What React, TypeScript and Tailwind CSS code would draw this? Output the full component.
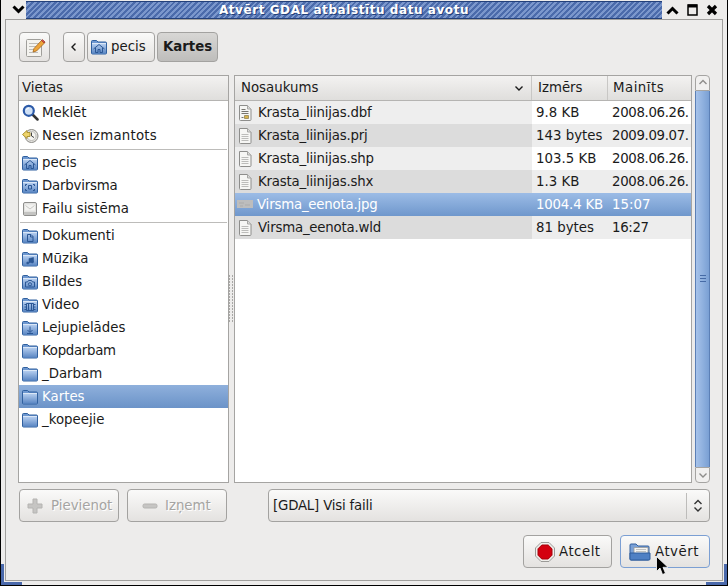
import React from 'react';

const FONT = "font-['DejaVu_Sans','Liberation_Sans',sans-serif]";

type Glyph = 'home' | 'desk' | 'doc' | 'music' | 'camera' | 'video' | 'down' | 'none';

function Folder({ glyph = 'none', size = 16 }: { glyph?: Glyph; size?: number }) {
  const s = '#2b5795';
  return (
    <svg width={size} height={size} viewBox="0 0 16 16" className="shrink-0">
      <defs>
        <linearGradient id="folderFill" x1="0" y1="0" x2="0" y2="1">
          <stop offset="0" stopColor="#b3ccee" />
          <stop offset="1" stopColor="#5a86c3" />
        </linearGradient>
      </defs>
      <path d="M.5 2.500a1 1 0 0 1 1-1h4l1.500 1.500h7.500a1 1 0 0 1 1 1v10a1 1 0 0 1-1 1h-13a1 1 0 0 1-1-1z" fill="#6d97d0" stroke="#30609f" />
      <path d="M1 5h14v9.500H1z" fill="url(#folderFill)" />
      <path d="M1 4.500h14" stroke="#dbe7f6" />
      {glyph === 'home' && <path d="M2.500 10 8 5.500l5.500 4.500M4.500 9v4.500h2.500v-3h2v3h2.500V9" fill="none" stroke={s} />}
      {glyph === 'desk' && <path d="M5 6.500H3.500v1.500M11 6.500h1.500v1.500M3.500 11v1.500H5M12.500 11v1.500H11M6.500 7.500h3v3.500h-3z" fill="none" stroke={s} />}
      {glyph === 'doc' && <path d="M5.500 6.500h3.500l2 2v5h-5.500zM8.500 6.500v2.500h2.500" fill="none" stroke={s} />}
      {glyph === 'music' && <path d="M7 12V7.500l4.500-1V11M7 12a1.200 1 0 1 1-2.400 0 1.200 1 0 0 1 2.400 0zM11.500 11a1.200 1 0 1 1-2.400 0 1.200 1 0 0 1 2.400 0z" fill={s} stroke={s} strokeWidth=".6" />}
      {glyph === 'camera' && (
        <g fill="none" stroke={s}>
          <path d="M3.500 8h2l1-1.500h3l1 1.500h2v5h-9z" />
          <circle cx="8" cy="10.300" r="1.600" />
        </g>
      )}
      {glyph === 'video' && <path d="M4.500 6.500h7v7h-7zM6.500 6.500v7M9.500 6.500v7M2.500 7.500h2M2.500 10h2M2.500 12.500h2M11.500 7.500h2M11.500 10h2M11.500 12.500h2" fill="none" stroke={s} />}
      {glyph === 'down' && <path d="M8 6.500v5.500M5.500 10 8 12.500 10.500 10M5 13.500h6" fill="none" stroke={s} />}
    </svg>
  );
}

function Magnifier() {
  return (
    <svg width="17" height="17" viewBox="0 0 17 17" className="shrink-0">
      <path d="m10.500 10.500 5 5" stroke="#333" strokeWidth="2.500" strokeLinecap="round" />
      <circle cx="6.800" cy="6.800" r="5" fill="#cfe0f5" stroke="#2c5aa8" strokeWidth="2.200" />
      <path d="M4.500 6a2.500 2.500 0 0 1 2.500-2" stroke="#fff" fill="none" />
    </svg>
  );
}

function RecentClock() {
  return (
    <svg width="17" height="17" viewBox="0 0 17 17" className="shrink-0">
      <circle cx="9.500" cy="9" r="6.500" fill="#e4e3df" stroke="#8d8c88" />
      <circle cx="9.500" cy="9" r="4.500" fill="#f6f5f1" stroke="#bdbcb8" />
      <path d="M9.500 5.500V9l2.500 1.500" stroke="#444" fill="none" />
      <path d="M.5 7.500 5 3.500v2h3v4H5v2z" fill="#efd46a" stroke="#ad9436" />
    </svg>
  );
}

function Drive() {
  return (
    <svg width="16" height="16" viewBox="0 0 16 16" className="shrink-0">
      <rect x="1.500" y="1.500" width="13" height="13" rx="1.500" fill="#e3e3e1" stroke="#8f8f8d" />
      <path d="M3 3.500h10v6H3z" fill="#f3f3f1" />
      <path d="M3.500 4.500 8 8l4.500-3.500" stroke="#c9c9c7" fill="none" />
      <path d="M2 11h12v3H2z" fill="#c4c4c2" />
    </svg>
  );
}

function FileIcon({ dbf }: { dbf?: boolean }) {
  return (
    <svg width="14" height="16" viewBox="0 0 14 16" className="shrink-0">
      <path d="M1.500.5h8l3.500 3.500v10.500a1 1 0 0 1-1 1H2.500a1 1 0 0 1-1-1z" fill="#f6f6f4" stroke="#8e8e8c" />
      <path d="M9.500.5V4H13" fill="#dcdcda" stroke="#a6a6a4" />
      {!dbf && <path d="M3.500 6.500h7M3.500 8.500h7M3.500 10.500h7M3.500 12.500h7" stroke="#bcbcba" />}
      {dbf && <path d="M3.500 4.500h4M3.500 6.500h7M3.500 8.500h7M3.500 12.500h2" stroke="#77756f" />}
      {dbf && <path d="M6.500 10.500h4v3h-4z" fill="#d8b34d" stroke="#7b6a33" strokeWidth=".6" />}
    </svg>
  );
}

function ImageThumb() {
  return (
    <svg width="16" height="8" viewBox="0 0 16 8" className="shrink-0">
      <rect width="16" height="8" fill="#bdbdbd" />
      <path d="M2 3h5M8 5h5M3 6h3" stroke="#ababab" />
    </svg>
  );
}

function Chevron({ dir, className = '' }: { dir: 'up' | 'down' | 'left'; className?: string }) {
  const d = dir === 'up' ? 'M1.500 6 5 2.500 8.500 6' : dir === 'down' ? 'M1.500 3.500 5 7 8.500 3.500' : 'M6.500 1.500 3 5l3.500 3.500';
  return (
    <svg width="10" height="10" viewBox="0 0 10 10" className={className}>
      <path d={d} fill="none" stroke="currentColor" strokeWidth="1.400" />
    </svg>
  );
}

function EditIcon() {
  return (
    <svg width="22" height="22" viewBox="0 0 22 22">
      <rect x="2.500" y="3.500" width="15" height="17" rx="1" fill="#f4f3ef" stroke="#a09f9b" />
      <path d="M5 7.500h10M5 10.500h7M5 13.500h5M5 16.500h9" stroke="#bdbcb8" />
      <path d="m9 16 1-3.500L18 4l3 2.500-8.500 8.500z" fill="#eda53a" stroke="#a3651b" strokeWidth=".8" />
      <path d="m17.500 4.500 1-1 2.500 2.500-1 1z" fill="#d9534a" stroke="#91312b" strokeWidth=".6" />
    </svg>
  );
}

function PlusIcon() {
  return (
    <svg width="16" height="16" viewBox="0 0 16 16">
      <path d="M6 1h4v5h5v4h-5v5H6v-5H1V6h5z" fill="#c6c5c3" stroke="#b5b4b2" />
    </svg>
  );
}

function MinusIcon() {
  return (
    <svg width="16" height="16" viewBox="0 0 16 16">
      <rect x="1" y="6" width="14" height="4" rx="1.500" fill="#c6c5c3" stroke="#b5b4b2" />
    </svg>
  );
}

function StopIcon() {
  return (
    <svg width="20" height="20" viewBox="0 0 20 20">
      <path d="M6 .5h8L19.500 6v8L14 19.500H6L.5 14V6z" fill="#f0efec" stroke="#9b9a97" />
      <path d="M6.800 3h6.400L17 6.800v6.400L13.200 17H6.800L3 13.200V6.800z" fill="#d4000f" stroke="#a6000a" />
    </svg>
  );
}

function OpenFolderIcon() {
  return (
    <svg width="22" height="20" viewBox="0 0 22 20">
      <path d="M1 3a1 1 0 0 1 1-1h5l2 2h10a1 1 0 0 1 1 1v12a1 1 0 0 1-1 1H2a1 1 0 0 1-1-1z" fill="#7ba1d6" stroke="#33619f" />
      <path d="M5 5.500h14v6H5z" fill="#f4f4f2" stroke="#9a9a98" strokeWidth=".8" />
      <path d="M7 7.500h10M7 9.500h10" stroke="#c2c2c0" />
      <path d="M1 11h20v6a1 1 0 0 1-1 1H2a1 1 0 0 1-1-1z" fill="#4f80c4" stroke="#2f5c9c" />
    </svg>
  );
}

function Cursor() {
  return (
    <svg width="13" height="20" viewBox="0 0 13 20" className="absolute left-[656px] top-[556px]">
      <path d="M.5.5v15l3.500-3.500 2.500 6.500 3-1.200-2.500-6H12z" fill="#000" stroke="#fff" strokeWidth=".8" />
    </svg>
  );
}

function TitleBtn({ children }: { children: React.ReactNode }) {
  return <div className="flex h-[17px] w-[20px] items-center justify-center">{children}</div>;
}

const btnClass =
  'flex items-center rounded-[4px] border border-[#a3a2a0] bg-linear-to-b from-[#fafaf9] to-[#e4e2e0]';

function Separator() {
  return <div className="mx-px mb-px mt-[2px] h-px bg-[#bdbcba]" />;
}

function Place({ label, icon, selected, track = '' }: { label: string; icon: React.ReactNode; selected?: boolean; track?: string }) {
  return (
    <div
      className={`flex h-[23px] items-center gap-[3px] pl-[2px] ${
        selected ? 'bg-linear-to-b from-[#8fb0dc] to-[#6b93c8] text-white' : ''
      }`}
    >
      <div className="flex w-[18px] justify-center">{icon}</div>
      <span className={track}>{label}</span>
    </div>
  );
}

const files = [
  { name: 'Krasta_liinijas.dbf', size: '9.8 KB', date: '2008.06.26.', dbf: true },
  { name: 'Krasta_liinijas.prj', size: '143 bytes', date: '2009.09.07.' },
  { name: 'Krasta_liinijas.shp', size: '103.5 KB', date: '2008.06.26.' },
  { name: 'Krasta_liinijas.shx', size: '1.3 KB', date: '2008.06.26.' },
  { name: 'Virsma_eenota.jpg', size: '1004.4 KB', date: '15:07', selected: true },
  { name: 'Virsma_eenota.wld', size: '81 bytes', date: '16:27' },
];

function FileRow({ file, index }: { file: (typeof files)[number]; index: number }) {
  if (file.selected) {
    return (
      <div className="flex h-[23px] items-center bg-linear-to-b from-[#9cbce6] to-[#6f97cc] text-white">
        <div className="flex w-[297px] items-center gap-[4px] pl-[2px]">
          <ImageThumb />
          <span className="tracking-[-0.2px]">{file.name}</span>
        </div>
        <div className="w-[76px] pl-[4px] tracking-[-0.2px]">{file.size}</div>
        <div className="pl-[4px]">{file.date}</div>
      </div>
    );
  }
  const odd = index % 2 === 1;
  return (
    <div className={`flex h-[23px] items-center ${odd ? 'bg-[#ededed]' : 'bg-white'}`}>
      <div className={`flex h-full w-[297px] items-center gap-[6px] pl-[3px] ${odd ? 'bg-[#dcdcdc]' : 'bg-[#eeeeee]'}`}>
        <FileIcon dbf={file.dbf} />
        <span className="tracking-[-0.2px]">{file.name}</span>
      </div>
      <div className="w-[76px] pl-[4px]">{file.size}</div>
      <div className="pl-[4px] tracking-[-0.35px]">{file.date}</div>
    </div>
  );
}

function Column({ label, width, children }: { label: string; width: string; children?: React.ReactNode }) {
  return (
    <div className={`flex h-full items-center justify-between border-r border-[#c8c7c5] pl-[6px] pr-[6px] ${width}`}>
      <span>{label}</span>
      {children}
    </div>
  );
}

export default function App() {
  return (
    <div className={`relative flex h-[586px] w-[728px] flex-col overflow-hidden bg-[#edeceb] text-[13.33px] leading-none text-[#1a1a1a] ${FONT}`}>
      {/* window frame */}
      <div className="mt-px flex h-[18px] shrink-0 pl-[8px] pr-[6px]">
        <div className="w-[18px]">
          <TitleBtn>
            <svg width="13" height="9" viewBox="0 0 13 9">
              <path d="m1.500 1.500 5 5 5-5" fill="none" stroke="#000" strokeWidth="3" />
            </svg>
          </TitleBtn>
        </div>
        <div className="flex flex-1 items-center justify-center border-y border-[#23407a] bg-[#5575b2] bg-[repeating-linear-gradient(135deg,#4b6bab_0,#4b6bab_2px,#7b97cc_2px,#7b97cc_4px)]">
          <span className="text-[12px] font-bold tracking-[0.57px] text-white [text-shadow:1px_1px_0_#23407a]">
            Atvērt GDAL atbalstītu datu avotu
          </span>
        </div>
        <div className="flex w-[60px] items-center">
          <TitleBtn>
            <svg width="13" height="9" viewBox="0 0 13 9">
              <path d="m1.500 7.500 5-5 5 5" fill="none" stroke="#000" strokeWidth="3" />
            </svg>
          </TitleBtn>
          <TitleBtn>
            <svg width="11" height="12" viewBox="0 0 11 12">
              <path d="M1 1h9v10H1z" fill="none" stroke="#000" strokeWidth="1.500" />
              <path d="M1 2h9" stroke="#000" strokeWidth="3" />
            </svg>
          </TitleBtn>
          <TitleBtn>
            <svg width="12" height="12" viewBox="0 0 12 12">
              <path d="m2 2 8 8M10 2l-8 8" fill="none" stroke="#000" strokeWidth="3.200" />
            </svg>
          </TitleBtn>
        </div>
      </div>

      <div className="mb-[5px] ml-[5px] mr-[5px] flex min-h-0 flex-1 flex-col border border-[#a09f9d] pl-[12px] pr-[12px] pt-[12px]">
        {/* path bar */}
        <div className="flex h-[30px] shrink-0 pl-px">
          <div className={`${btnClass} w-[31px] justify-center`}>
            <EditIcon />
          </div>
          <div className={`${btnClass} ml-[13px] w-[22px] justify-center`}>
            <Chevron dir="left" />
          </div>
          <div className={`${btnClass} ml-[2px] w-[68px] gap-[4px] pl-[3px]`}>
            <Folder glyph="home" />
            <span>pecis</span>
          </div>
          <div className="ml-[2px] flex w-[61px] items-center justify-center rounded-[4px] border border-[#a3a2a0] bg-linear-to-b from-[#d8d7d5] to-[#bebdbb] font-bold">
            Kartes
          </div>
        </div>

        {/* panes */}
        <div className="mt-[13px] flex h-[408px] shrink-0">
          <div className="flex w-[211px] flex-col border border-[#a5a4a2] bg-white">
            <div className="flex h-[25px] shrink-0 items-center border-b border-[#b5b4b2] bg-linear-to-b from-[#f3f2f1] to-[#dfdedc] pl-[3px]">
              Vietas
            </div>
            <Place label="Meklēt" icon={<Magnifier />} />
            <Place label="Nesen izmantots" icon={<RecentClock />} track="tracking-[0.2px]" />
            <Separator />
            <Place label="pecis" icon={<Folder glyph="home" />} />
            <Place label="Darbvirsma" icon={<Folder glyph="desk" />} track="tracking-[-0.2px]" />
            <Place label="Failu sistēma" icon={<Drive />} />
            <Separator />
            <Place label="Dokumenti" icon={<Folder glyph="doc" />} />
            <Place label="Mūzika" icon={<Folder glyph="music" />} />
            <Place label="Bildes" icon={<Folder glyph="camera" />} />
            <Place label="Video" icon={<Folder glyph="video" />} />
            <Place label="Lejupielādes" icon={<Folder glyph="down" />} />
            <Place label="Kopdarbam" icon={<Folder />} track="tracking-[-0.3px]" />
            <Place label="_Darbam" icon={<Folder />} />
            <Place label="Kartes" icon={<Folder />} selected />
            <Place label="_kopeejie" icon={<Folder />} />
          </div>

          <div className="flex w-[5px] pt-[200px]">
            <div className="grid h-fit grid-cols-2 gap-x-[2px] gap-y-px">
              {Array.from({ length: 32 }, (_, i) => (
                <span key={i} className="h-[2px] w-px bg-[#a9a8a6]" />
              ))}
            </div>
          </div>

          <div className="flex w-[458px] flex-col border border-[#a5a4a2] bg-white">
            <div className="flex h-[25px] shrink-0 items-center border-b border-[#b5b4b2] bg-linear-to-b from-[#f3f2f1] to-[#dfdedc]">
              <Column label="Nosaukums" width="w-[297px]">
                <Chevron dir="down" className="mr-[1px]" />
              </Column>
              <Column label="Izmērs" width="w-[76px]" />
              <div className="pl-[5px] tracking-[0.5px]">Mainīts</div>
            </div>
            {files.map((file, index) => (
              <FileRow key={file.name} file={file} index={index} />
            ))}
          </div>

          <div className="ml-[3px] flex w-[15px] flex-col text-[#8e8d8b]">
            <div className="flex h-[16px] items-center justify-center rounded-t-[4px] border border-[#a5a4a2] bg-[#f1f0ef]">
              <Chevron dir="up" />
            </div>
            <div className="flex flex-1 items-center justify-center border-x border-[#5c80b6] bg-linear-to-r from-[#a7c3ea] to-[#7aa0d4]">
              <div className="flex w-[6px] flex-col gap-[2px] pb-[2px]">
                <span className="h-px bg-[#466ba6]" />
                <span className="h-px bg-[#466ba6]" />
                <span className="h-px bg-[#466ba6]" />
              </div>
            </div>
            <div className="flex h-[16px] items-center justify-center rounded-b-[4px] border border-[#a5a4a2] bg-[#f1f0ef]">
              <Chevron dir="down" />
            </div>
          </div>
        </div>

        {/* add/remove + filter */}
        <div className="mt-[6px] flex h-[33px] shrink-0 pl-px">
          <div className={`${btnClass} w-[100px] gap-[8px] pl-[7px] text-[#a5a4a2] [text-shadow:1px_1px_0_#ffffff]`}>
            <PlusIcon />
            <span>Pievienot</span>
          </div>
          <div className={`${btnClass} ml-[8px] w-[100px] gap-[7px] pl-[14px] text-[#a5a4a2] [text-shadow:1px_1px_0_#ffffff]`}>
            <MinusIcon />
            <span>Izņemt</span>
          </div>
          <div className={`${btnClass} ml-[41px] w-[442px] pl-[4px]`}>
            <span className="flex-1 tracking-[-0.2px]">[GDAL] Visi faili</span>
            <div className="flex h-[26px] w-[23px] flex-col items-center justify-center border-l border-[#bdbcba] text-[#333]">
              <Chevron dir="up" className="mb-[-2px]" />
              <Chevron dir="down" className="mt-[-2px]" />
            </div>
          </div>
        </div>

        {/* actions */}
        <div className="mt-[13px] flex h-[33px] shrink-0 justify-end gap-[8px]">
          <div className={`${btnClass} w-[89px] gap-[4px] pl-[11px]`}>
            <StopIcon />
            <span className="tracking-[0.5px]">Atcelt</span>
          </div>
          <div className="flex w-[90px] items-center gap-[4px] rounded-[4px] border border-[#7b9fd3] bg-linear-to-b from-[#fafaf9] to-[#e4e2e0] pl-[8px]">
            <OpenFolderIcon />
            <span className="tracking-[0.5px]">Atvērt</span>
          </div>
        </div>
      </div>

      {/* outer edges and corners drawn over the frame */}
      <div className="absolute inset-x-0 bottom-0 h-px bg-black" />
      <div className="absolute inset-y-0 left-0 w-px bg-black" />
      <div className="absolute inset-y-0 right-0 w-px bg-black" />
      <div className="absolute bottom-px left-px h-[21px] w-[3px] bg-[#4a69ab]" />
      <div className="absolute bottom-px left-px h-[3px] w-[21px] bg-[#4a69ab]" />
      <div className="absolute bottom-px right-px h-[21px] w-[3px] bg-[#4a69ab]" />
      <div className="absolute bottom-px right-px h-[3px] w-[21px] bg-[#4a69ab]" />
      <Cursor />
    </div>
  );
}
